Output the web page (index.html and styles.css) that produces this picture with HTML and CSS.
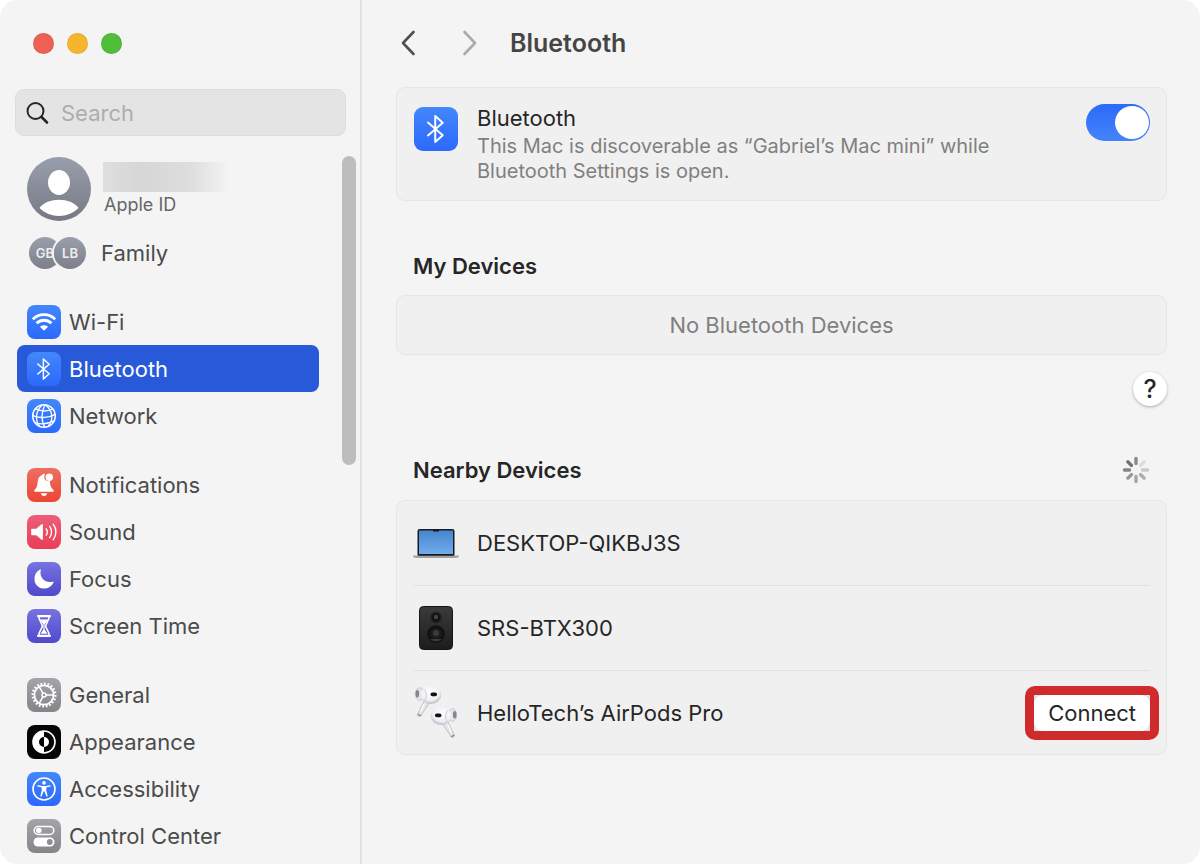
FILE: index.html
```html
<!DOCTYPE html>
<html lang="en">

<head>
    <meta charset="UTF-8">
    <title>Bluetooth</title>
    <link rel="stylesheet" href="styles.css">
</head>

<body>

    <!-- Shared bluetooth symbol -->
    <svg class="defs" aria-hidden="true">
        <symbol id="bt" viewBox="0 0 34 34">
            <path d="M10.8 12 L22.2 21.8 L16.4 27 V7 L22.2 12.2 L10.8 22" fill="none" stroke="#fff" stroke-width="1.5" stroke-linejoin="round" stroke-linecap="round" />
        </symbol>
    </svg>

    <div class="window">

        <aside class="sidebar">
            <div class="lights">
                <button class="light red" aria-label="Close"></button>
                <button class="light yellow" aria-label="Minimize"></button>
                <button class="light green" aria-label="Zoom"></button>
            </div>

            <label class="search">
                <svg width="24" height="24" viewBox="0 0 24 24" fill="none" stroke="#262626" stroke-linecap="round">
                    <circle cx="9.5" cy="10" r="8" stroke-width="2" />
                    <path d="M15.5 16 L21 21.5" stroke-width="2.6" />
                </svg>
                <input type="search" placeholder="Search" aria-label="Search">
            </label>

            <div class="sidebar-body">
                <nav class="nav">
                    <a class="profile" href="#apple-id">
                        <svg width="64" height="64" viewBox="0 0 64 64">
                            <defs>
                                <linearGradient id="avatar" x1="0" y1="0" x2="0" y2="1">
                                    <stop offset="0" stop-color="#9a9fad" />
                                    <stop offset="1" stop-color="#767983" />
                                </linearGradient>
                            </defs>
                            <circle cx="32" cy="32" r="32" fill="url(#avatar)" />
                            <ellipse cx="32" cy="25.5" rx="11" ry="12.5" fill="#fff" />
                            <path d="M12.5 51 C20 40 44 40 51.5 51 C41 61.5 23 61.5 12.5 51 Z" fill="#fff" />
                        </svg>
                        <span class="profile-text">
                            <span class="hidden-name"></span>
                            <span class="profile-sub">Apple ID</span>
                        </span>
                    </a>
                    <a class="family" href="#family">
                        <span class="initials">
                            <span>GB</span>
                            <span>LB</span>
                        </span>
                        Family
                    </a>

                    <div class="group">
                        <a class="item" href="#wifi">
                            <svg class="icon blue" viewBox="0 0 34 34" fill="none" stroke="#fff" stroke-width="2.8">
                                <path d="M5.8 14.3 C12 8.1 22 8.1 28.2 14.3" />
                                <path d="M9.6 18.3 C13.8 14.2 20.2 14.2 24.4 18.3" />
                                <path d="M13 21.8 C15.2 19.8 18.8 19.8 21 21.8 L17 25.8 Z" fill="#fff" stroke="none" />
                            </svg>
                            Wi-Fi
                        </a>
                        <a class="item active" href="#bluetooth" aria-current="page">
                            <svg class="icon blue"><use href="#bt" /></svg>
                            Bluetooth
                        </a>
                        <a class="item" href="#network">
                            <svg class="icon blue" viewBox="0 0 34 34" fill="none" stroke="#fff" stroke-width="1.3">
                                <circle cx="17" cy="17" r="11.3" stroke-width="1.5" />
                                <path d="M18 5.8 C14 13 14 22 18 28.2" />
                                <path d="M15 6 C8 13 8 22 13 27.6" />
                                <path d="M18.5 6 C26 12 27 21 20.5 27.7" />
                                <path d="M8.6 9.6 C14 12.8 20 12.6 26 10" />
                                <path d="M5.8 16.6 C13 19.4 22 19.2 28.2 15.4" />
                                <path d="M8 23.8 C14 25.4 21 25 27 21.8" />
                            </svg>
                            Network
                        </a>
                    </div>

                    <div class="group">
                        <a class="item" href="#notifications">
                            <svg class="icon orange" viewBox="0 0 34 34" fill="#fff">
                                <path d="M17.8 6 C18.6 6 17 7.2 17.3 9.8 C17.6 12.3 20 13.6 22.9 13 C23.1 18.2 24.4 19.9 26.3 21.7 C27.2 22.6 26.9 23.7 25.8 23.7 H8.2 C7.1 23.7 6.8 22.6 7.7 21.7 C9.6 19.9 10.4 18 10.7 13.4 C11 9.8 13 7.6 15.2 7 C15.7 6.1 16.7 5.6 17.8 6 Z" />
                                <path d="M13.8 25.3 H20.2 C19.8 27.1 18.6 28 17 28 C15.4 28 14.2 27.1 13.8 25.3 Z" />
                                <circle cx="22.3" cy="9.2" r="3.7" />
                            </svg>
                            Notifications
                        </a>
                        <a class="item" href="#sound">
                            <svg class="icon pink" viewBox="0 0 34 34" fill="none" stroke="#fff" stroke-width="1.4" stroke-linecap="round">
                                <path d="M4.8 13.7 H9.2 L14.6 9.3 C15.2 8.8 15.9 9.1 15.9 9.9 V24.1 C15.9 24.9 15.2 25.2 14.6 24.7 L9.2 20.3 H4.8 C4.4 20.3 4.2 20.1 4.2 19.6 V14.4 C4.2 13.9 4.4 13.7 4.8 13.7 Z" fill="#fff" stroke="none" />
                                <path d="M19.2 13.8 C20.5 15.6 20.5 18.4 19.2 20.2" />
                                <path d="M22.7 11.4 C25.1 14.6 25.1 19.4 22.7 22.6" />
                                <path d="M26.2 9.2 C29.8 13.6 29.8 20.4 26.2 24.8" />
                            </svg>
                            Sound
                        </a>
                        <a class="item" href="#focus">
                            <svg class="icon purple" viewBox="0 0 34 34" fill="#fff">
                                <path d="M12.9 7.5 C13.5 7.1 14 7.5 13.8 8.3 C12 14.7 17.5 21.8 25.7 19.7 C26.4 19.5 26.8 20 26.4 20.7 C24.5 24.4 21.3 26.6 17.2 26.6 C11.6 26.6 7.4 22.3 7.4 16.9 C7.4 12.8 9.5 9.3 12.9 7.5 Z" />
                            </svg>
                            Focus
                        </a>
                        <a class="item" href="#screen-time">
                            <svg class="icon purple" viewBox="0 0 34 34" fill="none" stroke="#fff" stroke-width="1.6" stroke-linejoin="round">
                                <path d="M11 7.2 H23 M11 26.8 H23" stroke-width="2.2" stroke-linecap="round" />
                                <path d="M11.8 7 C11.8 12.5 15.3 14 15.3 17 C15.3 20 11.8 21.5 11.8 27 H22.2 C22.2 21.5 18.7 20 18.7 17 C18.7 14 22.2 12.5 22.2 7 Z" />
                                <path d="M12.5 10.4 H21.5 L17.6 15.3 V20.5 L20.5 24.8 H13.5 L16.4 20.5 V15.3 Z" fill="#fff" stroke="none" />
                            </svg>
                            Screen Time
                        </a>
                    </div>

                    <div class="group">
                        <a class="item" href="#general">
                            <svg class="icon gray" viewBox="0 0 34 34" fill="none" stroke="#fff" stroke-width="1.5">
                                <circle cx="17" cy="17" r="11.3" stroke-width="2.4" pathLength="40" stroke-dasharray="1 1" />
                                <circle cx="17" cy="17" r="9.6" stroke-width="1.7" />
                                <circle cx="17" cy="17" r="2" />
                                <path d="M19 17 H26.6 M16 15.3 L12.2 8.7 M16 18.7 L12.2 25.3" />
                            </svg>
                            General
                        </a>
                        <a class="item" href="#appearance">
                            <svg class="icon black" viewBox="0 0 34 34">
                                <circle cx="17" cy="17" r="11" fill="none" stroke="#fff" stroke-width="1.6" />
                                <path d="M17 6 A11 11 0 0 0 17 28 V22 A5 5 0 0 1 17 12 Z" fill="#fff" />
                                <path d="M17 12 A5 5 0 0 1 17 22 Z" fill="#fff" />
                            </svg>
                            Appearance
                        </a>
                        <a class="item" href="#accessibility">
                            <svg class="icon blue" viewBox="0 0 34 34" fill="#fff">
                                <circle cx="17" cy="17" r="11" fill="none" stroke="#fff" stroke-width="1.6" />
                                <circle cx="17" cy="10.9" r="1.8" />
                                <path d="M10.9 13.2 L15.4 14 H18.6 L23.1 13.2 C23.9 13.1 24 14.2 23.3 14.4 L19.3 15.4 V18.5 L20.6 23.8 C20.8 24.8 19.7 25 19.4 24.2 L17.3 19.3 H16.7 L14.6 24.2 C14.3 25 13.2 24.8 13.4 23.8 L14.7 18.5 V15.4 L10.7 14.4 C10 14.2 10.1 13.1 10.9 13.2 Z" />
                            </svg>
                            Accessibility
                        </a>
                        <a class="item" href="#control-center">
                            <svg class="icon gray" viewBox="0 0 34 34" fill="none" stroke="#fff" stroke-width="1.5">
                                <rect x="7.2" y="7.5" width="19.6" height="8" rx="4" />
                                <circle cx="11.8" cy="11.5" r="2.8" fill="#fff" stroke="none" />
                                <rect x="6.5" y="18.5" width="21" height="9" rx="4.5" fill="#fff" stroke="none" />
                                <circle cx="22.8" cy="23" r="2.9" fill="#8e8e92" stroke="none" />
                            </svg>
                            Control Center
                        </a>
                    </div>
                </nav>
                <div class="scrollbar"></div>
            </div>
        </aside>

        <main class="content">
            <header class="header">
                <button class="arrow" aria-label="Back">
                    <svg width="16" height="26" viewBox="0 0 16 26"><path d="M13.5 2 L3 13 L13.5 24" /></svg>
                </button>
                <button class="arrow" aria-label="Forward" disabled>
                    <svg width="16" height="26" viewBox="0 0 16 26"><path d="M2.5 2 L13 13 L2.5 24" /></svg>
                </button>
                <h1>Bluetooth</h1>
            </header>

            <section class="card power">
                <svg class="power-icon blue"><use href="#bt" /></svg>
                <div class="power-text">
                    <label for="power">Bluetooth</label>
                    <p>This Mac is discoverable as “Gabriel’s Mac mini” while Bluetooth Settings is open.</p>
                </div>
                <input class="switch" type="checkbox" role="switch" id="power" checked>
            </section>

            <h2>My Devices</h2>
            <div class="card empty">No Bluetooth Devices</div>
            <button class="help" aria-label="Help">?</button>

            <div class="nearby-head">
                <h2>Nearby Devices</h2>
                <svg class="spinner" width="28" height="28" viewBox="-14 -14 28 28" stroke="#333" stroke-width="3.4" stroke-linecap="round">
                    <path d="M0 -6.5 V-11.5" opacity=".55" />
                    <path d="M4.6 -4.6 L8.1 -8.1" opacity=".12" />
                    <path d="M6.5 0 H11.5" opacity=".22" />
                    <path d="M4.6 4.6 L8.1 8.1" opacity=".36" />
                    <path d="M0 6.5 V11.5" opacity=".4" />
                    <path d="M-4.6 4.6 L-8.1 8.1" opacity=".48" />
                    <path d="M-6.5 0 H-11.5" opacity=".58" />
                    <path d="M-4.6 -4.6 L-8.1 -8.1" opacity=".68" />
                </svg>
            </div>

            <ul class="card devices">
                <li>
                    <svg width="46" height="54" viewBox="0 0 46 54">
                        <defs>
                            <linearGradient id="screen" x1="0" y1="0" x2="0" y2="1">
                                <stop offset="0" stop-color="#4585cf" />
                                <stop offset="1" stop-color="#72aceb" />
                            </linearGradient>
                        </defs>
                        <rect x="4.5" y="13" width="37" height="28" rx="2" fill="#171a20" />
                        <rect x="6" y="14.5" width="34" height="23.5" fill="url(#screen)" />
                        <path d="M20 14 H26 V15.5 H20 Z" fill="#171a20" />
                        <path d="M0 39.5 H46 C46 41.3 44.5 42 42 42 H4 C1.5 42 0 41.3 0 39.5 Z" fill="#a3a0a0" />
                        <path d="M6 39.5 H40" stroke="#3b3b3d" stroke-width="1" />
                    </svg>
                    <span>DESKTOP-QIKBJ3S</span>
                </li>
                <li>
                    <svg width="46" height="54" viewBox="0 0 46 54">
                        <defs>
                            <linearGradient id="speaker" x1="0" y1="0" x2="0" y2="1">
                                <stop offset="0" stop-color="#3b3b3b" />
                                <stop offset="1" stop-color="#1c1c1c" />
                            </linearGradient>
                        </defs>
                        <rect x="6.5" y="5.5" width="33" height="43" rx="4" fill="url(#speaker)" stroke="#161616" />
                        <circle cx="23" cy="16.5" r="5.8" fill="#202020" />
                        <circle cx="23" cy="16.5" r="4.2" fill="#121212" />
                        <circle cx="23" cy="16" r="2.2" fill="#444" />
                        <circle cx="23" cy="33" r="8.8" fill="#121212" />
                        <path d="M17 38 A8.5 8.5 0 0 0 29 38 Z" fill="#3c3c3c" />
                        <circle cx="23" cy="32.5" r="5.6" fill="#1c1c1c" />
                        <circle cx="23" cy="32" r="3" fill="#3b3b3d" />
                    </svg>
                    <span>SRS-BTX300</span>
                </li>
                <li>
                    <svg width="46" height="54" viewBox="0 0 46 54">
                        <defs>
                            <radialGradient id="pod" cx=".45" cy=".35" r=".65">
                                <stop offset="0" stop-color="#fff" />
                                <stop offset=".7" stop-color="#efeff3" />
                                <stop offset="1" stop-color="#b9bac2" />
                            </radialGradient>
                            <!-- one bud, mirrored for the other ear -->
                            <g id="bud">
                                <path d="M12 13 L4.4 28.5 C4 30 6.4 31.6 7.6 30 L17 16 Z" fill="#e5e5ea" stroke="#b8b8bf" stroke-width=".8" />
                                <path d="M4.8 28.3 L8 29.8" stroke="#77777d" stroke-width="1.2" />
                                <path d="M11 18 L7.5 25.5" stroke="#fff" stroke-width="1.2" />
                                <ellipse cx="6.5" cy="8" rx="4.2" ry="6.4" fill="#e3e3e8" stroke="#c1c1c8" stroke-width=".7" />
                                <ellipse cx="4.3" cy="7.8" rx="1.8" ry="3.7" fill="#85868f" />
                                <ellipse cx="17.8" cy="9" rx="10.5" ry="9" fill="url(#pod)" />
                                <path d="M11 3.5 C14 6.5 14 12 11.5 15" fill="none" stroke="#c2c2c9" stroke-width=".9" />
                                <rect x="17.5" y="6.5" width="6.5" height="3.8" rx="1.8" fill="#111" />
                            </g>
                        </defs>
                        <use href="#bud" />
                        <use href="#bud" transform="translate(46 21) scale(-1 1)" />
                    </svg>
                    <span>HelloTech’s AirPods Pro</span>
                    <div class="highlight">
                        <button class="connect">Connect</button>
                    </div>
                </li>
            </ul>
        </main>

    </div>

</body>

</html>
```
FILE: styles.css
```css
* {
    box-sizing: border-box;
}

body {
    margin: 0;
    background: #fff;
    color: #262626;
    font-family: Inter, "Liberation Sans", sans-serif;
    font-size: 22px;
    line-height: 28px;
}

button {
    padding: 0;
    border: none;
    background: none;
    font: inherit;
    color: inherit;
}

a {
    color: inherit;
    text-decoration: none;
}

.defs {
    position: absolute;
    width: 0;
    height: 0;
}

.window {
    display: flex;
    height: 100vh;
    overflow: hidden;
    background: #f4f4f4;
    border-radius: 18px;
}

/* Sidebar */
.sidebar {
    display: flex;
    flex-direction: column;
    flex: 0 0 362px;
    min-width: 0;
    border-right: 2px solid #e0e0e0;
    color: #4b4b4b;
}

.lights {
    display: flex;
    gap: 13px;
    padding: 33px 33px 35px;
}

.light {
    width: 21px;
    height: 21px;
    border-radius: 50%;
    border: 1px solid rgba(0, 0, 0, 0.06);
}

.red {
    background: #ee6055;
}

.yellow {
    background: #f5b52e;
}

.green {
    background: #4fbe3b;
}

.search {
    display: flex;
    flex: none;
    align-items: center;
    gap: 11px;
    height: 47px;
    margin: 0 14px 0 15px;
    padding: 0 10px;
    background: #e4e4e4;
    border: 1px solid #dcdcdc;
    border-radius: 9px;
}

.search svg {
    flex: none;
}

.search input {
    flex: 1;
    min-width: 0;
    padding: 0;
    border: none;
    outline: none;
    background: none;
    font: inherit;
}

.search input::placeholder {
    color: #adadad;
}

.sidebar-body {
    display: flex;
    justify-content: space-between;
    padding: 20px 4px 0 17px;
}

.nav {
    flex: 0 0 302px;
}

.scrollbar {
    width: 14px;
    height: 309px;
    background: #bdbdbd;
    border-radius: 7px;
}

.profile {
    display: flex;
    gap: 12px;
    padding: 1px 10px 0;
}

.profile-text {
    display: flex;
    flex-direction: column;
    padding-top: 5px;
}

.hidden-name {
    width: 126px;
    height: 30px;
    background: linear-gradient(to right, #dedede, #d6d6d6 30%, #dedede 70%, #f4f4f4);
}

.profile-sub {
    padding-left: 1px;
    font-size: 18px;
    line-height: 26px;
    color: #666;
}

.family {
    display: flex;
    align-items: center;
    gap: 15px;
    height: 64px;
    padding-left: 12px;
}

.initials {
    display: flex;
}

.initials span {
    width: 32px;
    height: 32px;
    border-radius: 50%;
    background: linear-gradient(#9a9fad, #7c7f89);
    color: #eee;
    font-size: 13px;
    font-weight: 600;
    line-height: 32px;
    text-align: center;
}

.initials span + span {
    margin-left: -7px;
    box-shadow: 0 0 0 2px #f4f4f4;
}

.group {
    margin-bottom: 22px;
}

.family + .group {
    margin-top: 13px;
}

.item {
    display: flex;
    align-items: center;
    gap: 8px;
    height: 47px;
    padding-left: 10px;
    border-radius: 8px;
}

.item.active {
    background: #2759d9;
    color: #fff;
}

.icon {
    width: 34px;
    height: 34px;
    border-radius: 8px;
}

.blue {
    background: linear-gradient(#4387fb, #2c69fb);
}

.orange {
    background: linear-gradient(#ee6f62, #ec4634);
}

.pink {
    background: linear-gradient(#ec5f7a, #ea3c55);
}

.purple {
    background: linear-gradient(#7773df, #5049cd);
}

.gray {
    background: linear-gradient(#a5a5a9, #858589);
}

.black {
    background: #060606;
}

/* Main pane */
.content {
    flex: 1;
    min-width: 0;
    padding: 28px 33px 0 34px;
}

.header {
    display: flex;
    align-items: center;
    height: 30px;
    margin-bottom: 29px;
}

.arrow {
    display: flex;
    margin: 0 46px 0 4px;
}

.arrow + .arrow {
    margin: 0 32px 0 0;
}

.arrow path {
    fill: none;
    stroke: #505050;
    stroke-width: 2.6;
    stroke-linecap: round;
    stroke-linejoin: round;
}

.arrow:disabled path {
    stroke: #ababab;
}

h1 {
    margin: 0;
    font-size: 25px;
    font-weight: 600;
    color: #454545;
}

h2 {
    margin: 0;
    padding-left: 17px;
    font-size: 22px;
    font-weight: 600;
}

.card {
    margin: 0;
    background: #f0f0f0;
    border: 1px solid #e6e6e6;
    border-radius: 9px;
}

.power {
    display: flex;
    align-items: flex-start;
    padding: 16px;
    margin-bottom: 51px;
}

.power-icon {
    flex: none;
    width: 44px;
    height: 44px;
    margin: 3px 19px 0 1px;
    border-radius: 9px;
}

.power-text {
    flex: 1;
    margin-right: 64px;
}

.power-text p {
    margin: 2px 0 0;
    font-size: 20px;
    line-height: 25px;
    color: #808080;
}

.switch {
    appearance: none;
    flex: none;
    display: flex;
    justify-content: flex-end;
    width: 64px;
    height: 37px;
    margin: 0;
    padding: 2px 1px;
    border-radius: 19px;
    background: #b5b5b5;
}

.switch::before {
    content: "";
    width: 34px;
    height: 33px;
    border-radius: 50%;
    background: #fff;
}

.switch:checked {
    background: linear-gradient(#2b6bf8, #4384fb);
}

.switch:not(:checked) {
    justify-content: flex-start;
}

.empty {
    margin-top: 15px;
    padding: 15px;
    text-align: center;
    color: #808080;
}

.help {
    display: block;
    width: 34px;
    height: 34px;
    margin: 17px 0 0 auto;
    border-radius: 50%;
    background: #fff;
    box-shadow: 0 1px 3px rgba(0, 0, 0, 0.3);
    font-size: 25px;
    font-weight: 500;
    text-align: center;
}

.nearby-head {
    display: flex;
    align-items: center;
    justify-content: space-between;
    margin: 50px 17px 16px 0;
}

.devices {
    padding: 0 16px;
    list-style: none;
}

.devices li {
    display: flex;
    align-items: center;
    gap: 18px;
    height: 85px;
    border-bottom: 1px solid #e2e2e2;
}

.devices li:last-child {
    border-bottom: none;
    height: 83px;
}

/* Frame drawn over the row, around the button */
.highlight {
    position: relative;
    margin-left: auto;
}

.highlight::after {
    content: "";
    position: absolute;
    inset: -9px;
    border: 9px solid #d02b2c;
    border-radius: 10px;
    pointer-events: none;
}

.connect {
    display: block;
    height: 36px;
    padding: 0 14px;
    background: #fff;
    border-radius: 8px;
    box-shadow: 0 0 2px rgba(0, 0, 0, 0.4);
}
```
